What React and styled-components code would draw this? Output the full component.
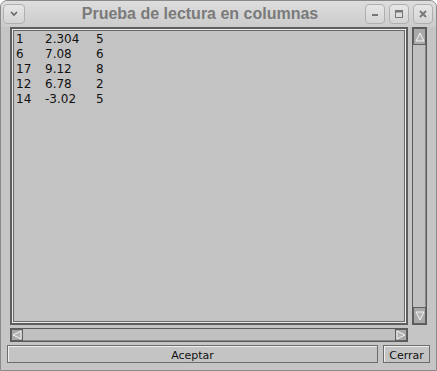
import styled, { createGlobalStyle } from 'styled-components';

const Global = createGlobalStyle`
  html, body {
    margin: 0;
    padding: 0;
    background: #ffffff;
  }
  body {
    font-family: "DejaVu Sans", "Liberation Sans", sans-serif;
  }
`;

const Window = styled.div`
  width: 437px;
  height: 371px;
  box-sizing: border-box;
  border: 1px solid #8a8a8a;
  border-radius: 7px 7px 0 0;
  background: #c5c5c5;
  display: flex;
  flex-direction: column;
  overflow: hidden;
`;

const TitleBar = styled.div`
  height: 26px;
  display: flex;
  align-items: center;
  padding: 0 3px 0 2px;
  background: linear-gradient(#dedede, #cbcbcb);
`;

const Title = styled.div`
  flex: 1;
  text-align: center;
  font-family: "Liberation Sans", Arial, sans-serif;
  font-weight: bold;
  font-size: 16px;
  color: #7a7a7a;
  padding-left: 10px;
`;

const TitleButton = styled.div`
  width: ${(p) => (p.wide ? 22 : 20)}px;
  height: 20px;
  box-sizing: border-box;
  margin-left: ${(p) => p.gap || 0}px;
  border: 1px solid #b0b0b0;
  border-radius: 4px;
  background: linear-gradient(#e6e6e6, #d4d4d4);
  display: flex;
  align-items: center;
  justify-content: center;
`;

const Body = styled.div`
  display: grid;
  grid-template-columns: 398px 15px;
  grid-template-rows: 298px 14px;
  column-gap: 4px;
  row-gap: 3px;
  padding: 0 0 0 9px;
`;

const TextArea = styled.div`
  box-sizing: border-box;
  border: 2px solid #5e5e5e;
  box-shadow: inset 0 0 0 1px #ececec, inset 0 0 0 2px #6a6a6a;
  background: #c3c3c3;
  padding: 3px 4px;
  font-family: "DejaVu Sans", sans-serif;
  font-size: 12px;
  color: #111;
`;

const Row = styled.div`
  display: grid;
  grid-template-columns: 29px 51px auto;
  height: 15px;
  line-height: 15px;
`;

const VScroll = styled.div`
  box-sizing: border-box;
  border: 1px solid #5a5a5a;
  background: #c0c0c0;
  box-shadow: inset -1px 0 0 #8a8a8a;
  display: flex;
  flex-direction: column;
  justify-content: space-between;
`;

const HScroll = styled.div`
  box-sizing: border-box;
  border: 1px solid #5a5a5a;
  background: #c0c0c0;
  box-shadow: inset 0 -1px 0 #8a8a8a;
  display: flex;
  justify-content: space-between;
`;

const Arrow = styled.div`
  width: ${(p) => (p.horizontal ? '12px' : '13px')};
  height: ${(p) => (p.horizontal ? '12px' : '17px')};
  box-sizing: border-box;
  background: #a9a9a9;
  border: 1px solid #606060;
  display: flex;
  align-items: center;
  justify-content: center;
`;

const ButtonRow = styled.div`
  display: flex;
  gap: 5px;
  padding: 3px 6px 0 6px;
  height: 18px;
`;

const Button = styled.div`
  flex: ${(p) => (p.grow ? 1 : 'none')};
  width: ${(p) => (p.grow ? 'auto' : '47px')};
  box-sizing: border-box;
  border: 1px solid #6c6c6c;
  box-shadow: inset 1px 1px 0 #efefef;
  background: #c4c4c4;
  display: flex;
  align-items: center;
  justify-content: center;
  padding-top: 2px;
  font-family: "DejaVu Sans", sans-serif;
  font-size: 11px;
  color: #111;
`;

const rows = [
  ['1', '2.304', '5'],
  ['6', '7.08', '6'],
  ['17', '9.12', '8'],
  ['12', '6.78', '2'],
  ['14', '-3.02', '5'],
];

const Tri = ({ dir }) => {
  const pts = {
    up: '1,9 5,1 9,9',
    down: '1,1 5,9 9,1',
    left: '9,1 1,5 9,9',
    right: '1,1 9,5 1,9',
  }[dir];
  return (
    <svg width="10" height="10" viewBox="0 0 10 10">
      <polygon points={pts} fill="#b4b4b4" stroke="#f4f4f4" strokeWidth="1" />
    </svg>
  );
};

export default function App() {
  return (
    <>
      <Global />
      <Window>
        <TitleBar>
          <TitleButton wide>
            <svg width="10" height="8" viewBox="0 0 10 8">
              <path d="M2 2 L5 5 L8 2" fill="none" stroke="#666" strokeWidth="1.6" />
            </svg>
          </TitleButton>
          <Title>Prueba de lectura en columnas</Title>
          <TitleButton>
            <svg width="10" height="10" viewBox="0 0 10 10">
              <rect x="2" y="5" width="6" height="2" fill="#777" />
            </svg>
          </TitleButton>
          <TitleButton gap={4}>
            <svg width="10" height="10" viewBox="0 0 10 10">
              <rect x="1.5" y="1.5" width="7" height="7" fill="none" stroke="#777" />
              <rect x="1.5" y="1.5" width="7" height="2" fill="#777" />
            </svg>
          </TitleButton>
          <TitleButton gap={4}>
            <svg width="10" height="10" viewBox="0 0 10 10">
              <path d="M2 2 L8 8 M8 2 L2 8" stroke="#777" strokeWidth="1.8" />
            </svg>
          </TitleButton>
        </TitleBar>
        <Body>
          <TextArea>
            {rows.map((r) => (
              <Row key={r[0]}>
                <span>{r[0]}</span>
                <span>{r[1]}</span>
                <span>{r[2]}</span>
              </Row>
            ))}
          </TextArea>
          <VScroll>
            <Arrow><Tri dir="up" /></Arrow>
            <Arrow><Tri dir="down" /></Arrow>
          </VScroll>
          <HScroll>
            <Arrow horizontal><Tri dir="left" /></Arrow>
            <Arrow horizontal><Tri dir="right" /></Arrow>
          </HScroll>
        </Body>
        <ButtonRow>
          <Button grow>Aceptar</Button>
          <Button>Cerrar</Button>
        </ButtonRow>
      </Window>
    </>
  );
}
